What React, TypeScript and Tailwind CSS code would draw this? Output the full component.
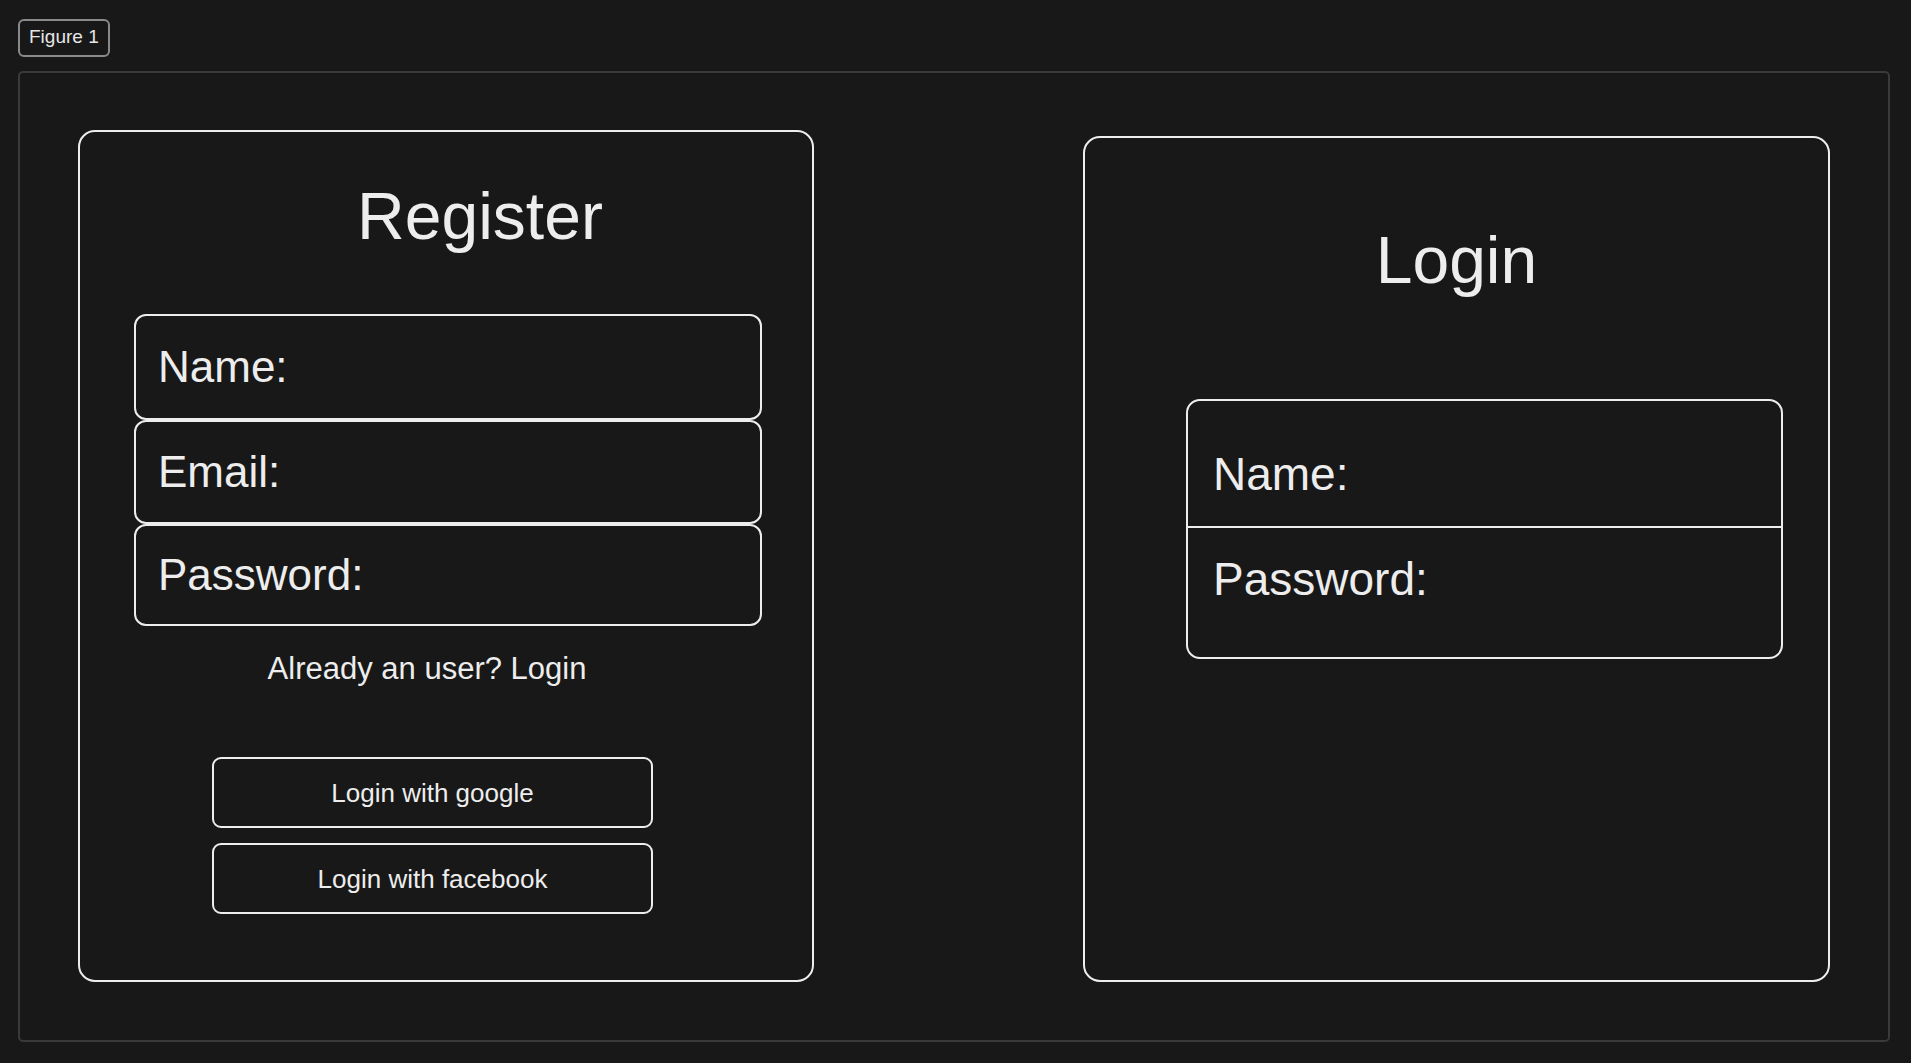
const FONT = "font-['Liberation_Sans',Arial,sans-serif]";

function Field({ label, className }: { label: string; className: string }) {
  return (
    <div className={`flex items-center rounded-[12px] border-2 border-[#ededed] pl-[22px] ${className}`}>
      <span className="text-[44px] leading-none text-[#ededed]">{label}</span>
    </div>
  );
}

function SocialButton({ label, className = "" }: { label: string; className?: string }) {
  return (
    <button
      type="button"
      className={`ml-[132px] flex h-[71px] w-[441px] items-center justify-center rounded-[9px] border-2 border-[#ededed] text-[26px] leading-none text-[#ededed] ${className}`}
    >
      {label}
    </button>
  );
}

export default function App() {
  return (
    <div className={`${FONT} flex h-[1063px] w-full flex-col bg-[#181818] pl-[18px] pt-[19px]`}>
      {/* Figure badge */}
      <div className="flex h-[38px] w-[92px] items-center rounded-[6px] border-2 border-[#8a8a8a] pb-[3px] pl-[9px] text-[19px] leading-none text-[#e6e6e6]">
        Figure 1
      </div>

      {/* Frame */}
      <div className="mt-[14px] flex h-[971px] w-[1872px] items-start justify-between rounded-[5px] border-2 border-[#3a3a3a] px-[58px] pt-[57px]">
        {/* Register */}
        <section className="flex h-[852px] w-[736px] flex-col rounded-[17px] border-2 border-[#ededed]">
          <h1 className="mt-[51px] pl-[68px] text-center text-[66px] leading-none text-[#ededed]">Register</h1>
          <div className="ml-[54px] mt-[65px] flex w-[628px] flex-col">
            <Field label="Name:" className="h-[106px]" />
            <Field label="Email:" className="h-[104px]" />
            <Field label="Password:" className="h-[102px]" />
          </div>
          <p className="mt-[27px] pr-[38px] text-center text-[31px] leading-none text-[#ededed]">
            Already an user? Login
          </p>
          <SocialButton label="Login with google" className="mt-[73px]" />
          <SocialButton label="Login with facebook" className="mt-[15px]" />
        </section>

        {/* Login */}
        <section className="mt-[6px] flex h-[846px] w-[747px] flex-col rounded-[17px] border-2 border-[#ededed]">
          <h1 className="mt-[89px] text-center text-[66px] leading-none text-[#ededed]">Login</h1>
          <div className="ml-[101px] mt-[106px] flex h-[260px] w-[597px] flex-col rounded-[14px] border-2 border-[#ededed]">
            <div className="h-[127px] border-b-2 border-[#ededed] pl-[25px] pt-[50px]">
              <span className="block text-[46px] leading-none text-[#ededed]">Name:</span>
            </div>
            <div className="flex-1 pl-[25px] pt-[28px]">
              <span className="block text-[46px] leading-none text-[#ededed]">Password:</span>
            </div>
          </div>
        </section>
      </div>
    </div>
  );
}
